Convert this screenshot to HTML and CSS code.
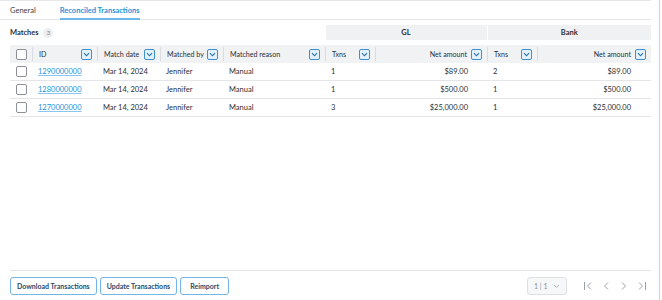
FILE: index.html
```html
<!DOCTYPE html>
<html>
<head>
<link rel="stylesheet" href="styles.css">
</head>
<body>

<div class="page">
    <div class="tabs">
        <span class="tab">General</span>
        <span class="tab active">Reconciled Transactions</span>
    </div>

    <table class="grid">
        <colgroup>
            <col style="width:22px"><col style="width:65px"><col style="width:63px"><col style="width:63px">
            <col style="width:102px"><col style="width:50px"><col style="width:112px"><col style="width:50px"><col style="width:114px">
        </colgroup>
        <thead>
            <tr class="groups">
                <th colspan="5" class="title">Matches <span class="badge">3</span></th>
                <th colspan="2" class="group">GL</th>
                <th colspan="2" class="group">Bank</th>
            </tr>
            <tr class="spacer"><td colspan="9"></td></tr>
            <tr class="heads">
                <th><span class="box"></span></th>
                <th><div class="hc">ID<span class="dd"></span></div></th>
                <th><div class="hc">Match date<span class="dd"></span></div></th>
                <th><div class="hc">Matched by<span class="dd"></span></div></th>
                <th><div class="hc">Matched reason<span class="dd"></span></div></th>
                <th><div class="hc">Txns<span class="dd"></span></div></th>
                <th><div class="hc right">Net amount<span class="dd"></span></div></th>
                <th><div class="hc">Txns<span class="dd"></span></div></th>
                <th class="last"><div class="hc right">Net amount<span class="dd"></span></div></th>
            </tr>
        </thead>
        <tbody>
            <tr>
                <td><span class="box"></span></td>
                <td><a class="link">1290000000</a></td>
                <td>Mar 14, 2024</td>
                <td>Jennifer</td>
                <td>Manual</td>
                <td>1</td>
                <td class="num">$89.00</td>
                <td>2</td>
                <td class="num">$89.00</td>
            </tr>
            <tr>
                <td><span class="box"></span></td>
                <td><a class="link">1280000000</a></td>
                <td>Mar 14, 2024</td>
                <td>Jennifer</td>
                <td>Manual</td>
                <td>1</td>
                <td class="num">$500.00</td>
                <td>1</td>
                <td class="num">$500.00</td>
            </tr>
            <tr>
                <td><span class="box"></span></td>
                <td><a class="link">1270000000</a></td>
                <td>Mar 14, 2024</td>
                <td>Jennifer</td>
                <td>Manual</td>
                <td>3</td>
                <td class="num">$25,000.00</td>
                <td>1</td>
                <td class="num">$25,000.00</td>
            </tr>
        </tbody>
    </table>

    <div class="footer">
        <div class="actions">
            <button class="btn">Download Transactions</button>
            <button class="btn">Update Transactions</button>
            <button class="btn">Reimport</button>
        </div>
        <div class="pager">
            <div class="select">1 | 1 <svg width="7" height="5" viewBox="0 0 7 5"><path d="M1 1l2.5 2.5L6 1" fill="none" stroke="#a9aeb5" stroke-width="0.9"/></svg></div>
            <svg class="nav" width="10" height="10" viewBox="0 0 10 10"><path d="M1.5 1v8M8 1.5L4.5 5 8 8.5" fill="none" stroke="#9ba1a9" stroke-width="1"/></svg>
            <svg class="nav" width="10" height="10" viewBox="0 0 10 10"><path d="M7 1.5L3.5 5 7 8.5" fill="none" stroke="#9ba1a9" stroke-width="1"/></svg>
            <svg class="nav" width="10" height="10" viewBox="0 0 10 10"><path d="M3 1.5L6.5 5 3 8.5" fill="none" stroke="#9ba1a9" stroke-width="1"/></svg>
            <svg class="nav" width="10" height="10" viewBox="0 0 10 10"><path d="M2 1.5L5.5 5 2 8.5M8.5 1v8" fill="none" stroke="#9ba1a9" stroke-width="1"/></svg>
        </div>
    </div>
</div>

</body>
</html>
```

FILE: styles.css
```css
body {
    margin: 0;
    padding: 0;
    font-family: Lato, "Open Sans", sans-serif;
    font-size: 7.5px;
    color: #2b2f36;
    background-color: white;
}

.page {
    width: 660px;
    height: 300px;
    box-sizing: border-box;
    border-right: 1px solid #cfd2d7;
    display: flex;
    flex-direction: column;
}

.tabs {
    width: 651px;
    height: 20px;
    box-sizing: border-box;
    border-top: 1px solid #e6e8eb;
    border-bottom: 1px solid #e3e5e8;
    padding-left: 10px;
    display: flex;
    gap: 24px;
    align-items: stretch;
}

.tab {
    display: flex;
    align-items: center;
    padding-top: 1px;
    color: #3a3f47;
}

.tab.active {
    color: #2592d9;
    font-weight: bold;
    border-bottom: 2px solid #6cb8ea;
    margin-bottom: -1px;
}

.grid {
    margin: 5px 0 0 10px;
    width: 641px;
    border-collapse: collapse;
    table-layout: fixed;
}

.grid th,
.grid td {
    padding: 0;
    white-space: nowrap;
    text-align: left;
}

.groups th {
    height: 15px;
}

.title {
    font-weight: bold;
    color: #2b2f36;
}

.badge {
    display: inline-block;
    width: 10px;
    height: 10px;
    line-height: 10px;
    border-radius: 50%;
    background-color: #eceef1;
    color: #7a8089;
    text-align: center;
    font-size: 6px;
    font-weight: normal;
    margin-left: 3px;
}

.group {
    background-color: #f0f1f3;
    text-align: center !important;
    font-weight: bold;
    border-left: 1px solid white;
}

.spacer td {
    height: 5px;
}

.heads th {
    height: 18px;
    background-color: #f1f2f4;
    font-weight: normal;
    color: #2b2f36;
}

.heads th:first-child {
    padding-left: 6px;
}

.hc {
    display: flex;
    align-items: center;
    justify-content: space-between;
    padding: 0 5px 0 6px;
    border-left: 1px solid #d9dce0;
    height: 14px;
    font-size: 7.1px;
}

.hc.right {
    justify-content: flex-end;
    gap: 4px;
}

.dd {
    display: inline-block;
    flex-shrink: 0;
    width: 9px;
    height: 9px;
    border: 1px solid #3d8fcf;
    border-radius: 2px;
    background: #e4f1fb url("data:image/svg+xml;utf8,<svg xmlns='http://www.w3.org/2000/svg' width='9' height='9'><path d='M2 3.2l2.5 2.6L7 3.2' fill='none' stroke='%231f6fae' stroke-width='1.1'/></svg>") no-repeat center;
}

.box {
    display: block;
    width: 9px;
    height: 9px;
    border: 1px solid #8b9099;
    border-radius: 2px;
    background-color: white;
}

tbody td {
    height: 17px;
    border-bottom: 1px solid #e3e5e9;
    padding-left: 6px !important;
}

.num {
    text-align: right !important;
}

tbody td:nth-child(7) {
    padding-right: 19px !important;
}

tbody td:nth-child(9) {
    padding-right: 20px !important;
}

.link {
    color: #2592d9;
    text-decoration: underline;
    text-decoration-color: #8cc6ee;
}

.footer {
    margin-top: auto;
    margin-left: 10px;
    width: 641px;
    height: 30px;
    box-sizing: border-box;
    border-top: 1px solid #e3e5e8;
    display: flex;
    justify-content: space-between;
    align-items: flex-start;
    padding-top: 6px;
}

.actions {
    display: flex;
    gap: 3px;
}

.btn {
    height: 18px;
    padding: 0 6px;
    border: 1px solid #72b6e6;
    border-radius: 3px;
    background-color: white;
    font-family: Lato, sans-serif;
    font-size: 7px;
    font-weight: bold;
    color: #274b6e;
}

.btn:last-child {
    padding: 0 9px;
}

.pager {
    display: flex;
    align-items: center;
    height: 18px;
    gap: 8px;
    padding-right: 4px;
}

.select {
    width: 40px;
    height: 18px;
    box-sizing: border-box;
    border: 1px solid #dcdfe3;
    border-radius: 3px;
    background-color: #f6f7f8;
    color: #8a9099;
    font-size: 7px;
    display: flex;
    align-items: center;
    justify-content: space-between;
    padding: 0 6px 0 6px;
    margin-right: 8px;
}
```
